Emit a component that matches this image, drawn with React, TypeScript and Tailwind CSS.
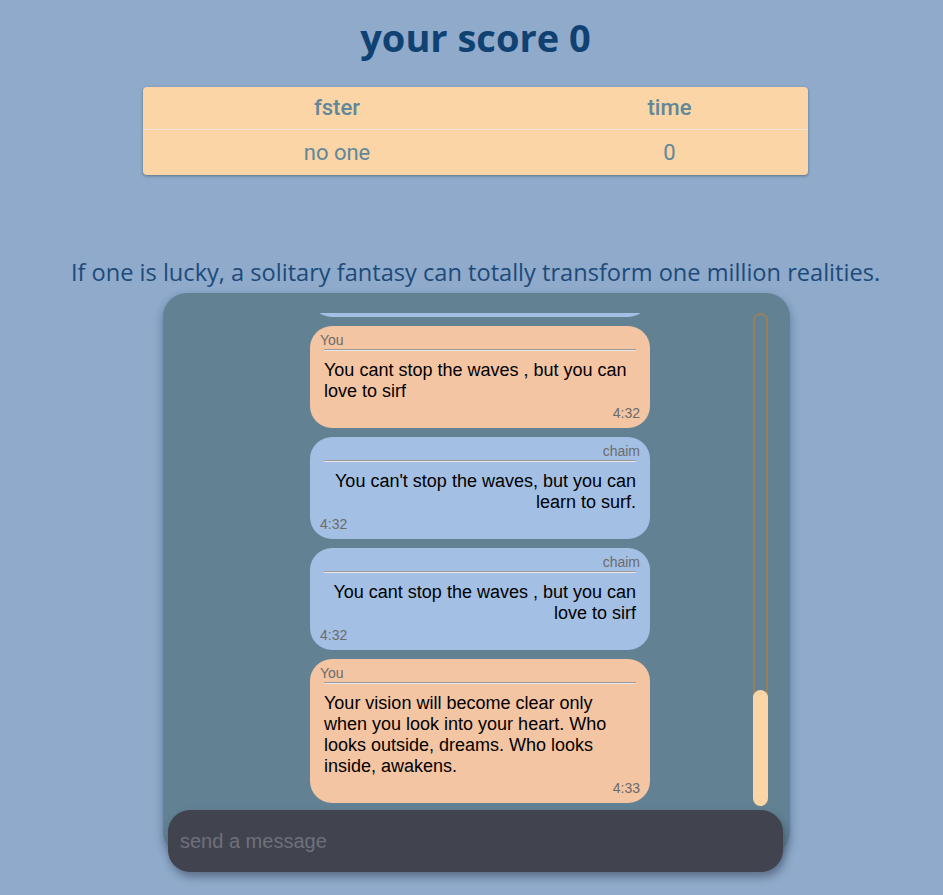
import React from 'react'

type Msg = {
  id: number
  from: string
  mine: boolean
  text: string
  time: string
}

const messages: Msg[] = [
  { id: 1, from: 'You', mine: true, text: 'You cant stop the waves , but you can love to sirf', time: '4:32' },
  { id: 2, from: 'chaim', mine: false, text: "You can't stop the waves, but you can learn to surf.", time: '4:32' },
  { id: 3, from: 'chaim', mine: false, text: 'You cant stop the waves , but you can love to sirf', time: '4:32' },
  {
    id: 4,
    from: 'You',
    mine: true,
    text: 'Your vision will become clear only when you look into your heart. Who looks outside, dreams. Who looks inside, awakens.',
    time: '4:33',
  },
]

function Bubble({ msg }: { msg: Msg }) {
  return (
    <div
      className={`w-[340px] shrink-0 rounded-[22px] px-[10px] pt-[6px] pb-[7px] ${
        msg.mine ? 'bg-[#f4c5a3] text-left' : 'bg-[#a4bfe4] text-right'
      }`}
    >
      <div className="text-[14px] leading-[16px] text-[#6b6b6b]">{msg.from}</div>
      <div className="mx-[4px] mt-[1px] h-[2px] border-t border-t-[#9a9a9a] border-b border-b-[#e8e8e8]" />
      <p className="mx-[4px] mt-[9px] text-[18px] leading-[21px] text-black">{msg.text}</p>
      <div
        className={`mt-[3px] text-[14px] leading-[16px] text-[#6b6b6b] ${msg.mine ? 'text-right' : 'text-left'}`}
      >
        {msg.time}
      </div>
    </div>
  )
}

export default function App() {
  return (
    <div className="flex min-h-screen flex-col items-center bg-[#8faaca] pl-[8px] font-['Liberation_Sans',Arial,sans-serif]">
      {/* score */}
      <h1 className="mt-[13px] font-['Open_Sans','Noto_Sans',sans-serif] text-[38px] font-bold leading-[48px] text-[#0f4172]">
        your score 0
      </h1>

      {/* leaderboard */}
      <table className="mt-[26px] w-[665px] overflow-hidden rounded-[4px] bg-[#fbd5a6] font-['Roboto',sans-serif] text-[22px] text-[#61879a] shadow-[0_1px_3px_rgba(0,0,0,0.35)]">
        <thead>
          <tr className="h-[42px] border-b border-[#ede3d6]">
            <th className="w-[388px] font-medium">fster</th>
            <th className="font-medium">time</th>
          </tr>
        </thead>
        <tbody>
          <tr className="h-[46px]">
            <td className="text-center">no one</td>
            <td className="text-center">0</td>
          </tr>
        </tbody>
      </table>

      {/* quote */}
      <p className="mt-[81px] font-['Open_Sans','Noto_Sans',sans-serif] text-[23.6px] leading-[32px] text-[#1d4a7a]">
        If one is lucky, a solitary fantasy can totally transform one million realities.
      </p>

      {/* chat */}
      <div className="ml-[2px] mt-[5px] flex w-[627px] flex-col rounded-[24px] bg-[#628294] pt-[20px] shadow-[0_4px_10px_rgba(40,60,90,0.45)]">
        <div className="flex h-[493px]">
          <div className="flex flex-1 flex-col items-start justify-end gap-[9px] overflow-hidden pb-[3px] pl-[147px]">
            <div className="h-[90px] w-[340px] shrink-0 rounded-[22px] bg-[#a4bfe4]" />
            {messages.map((m) => (
              <Bubble key={m.id} msg={m} />
            ))}
          </div>
          <div className="mr-[22px] flex w-[15px] flex-col justify-end rounded-full border-2 border-[#96805c]">
            <div className="-mx-[2px] -mb-[2px] h-[116px] rounded-full bg-[#fbd5a6]" />
          </div>
        </div>
        <div className="-mb-[17px] ml-[5px] mr-[7px] mt-[4px] flex h-[62px] items-center rounded-[22px] bg-[#41434f] pl-[12px] shadow-[2px_5px_8px_rgba(30,40,60,0.45)]">
          <input
            placeholder="send a message"
            className="w-full bg-transparent text-[20px] text-[#d0d0d0] outline-none placeholder:text-[#6f717b]"
          />
        </div>
      </div>
    </div>
  )
}
